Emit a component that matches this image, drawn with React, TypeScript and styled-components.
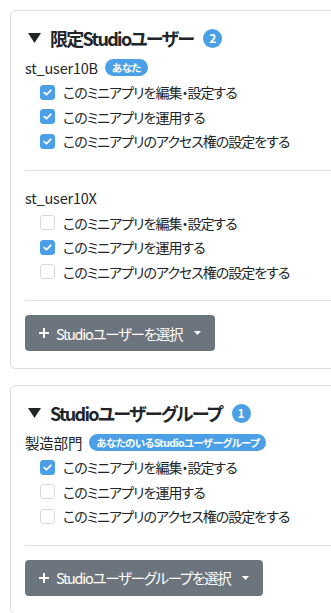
import React from "react";
import styled, { createGlobalStyle } from "styled-components";

const Global = createGlobalStyle`
  html, body { margin: 0; padding: 0; background: #fff; overflow: hidden; }
  body {
    font-family: "Noto Sans CJK JP", "Noto Sans", sans-serif;
    font-feature-settings: "palt";
    color: #212529;
  }
`;

const Page = styled.div`
  padding: 10px 0 0 10px;
  display: flex;
  flex-direction: column;
  gap: 16px;
`;

const Card = styled.section`
  width: 360px;
  border: 1px solid #dcdcdc;
  border-radius: 6px;
  padding: 13px 14px 17px 14px;
  display: flex;
  flex-direction: column;
`;

const Title = styled.h2`
  margin: 0;
  height: 28px;
  display: flex;
  align-items: center;
  font-size: 18px;
  letter-spacing: -1.7px;
  font-weight: 700;
  line-height: 28px;
`;

const Caret = styled.svg`
  width: 13px;
  height: 10px;
  margin: 0 9px 0 3px;
  flex: none;
`;

const CountBadge = styled.span`
  margin-left: 10px;
  width: 19px;
  height: 19px;
  border-radius: 50%;
  background: #4a9fe6;
  color: #fff;
  font-size: 12px;
  letter-spacing: 0;
  font-weight: 700;
  display: inline-flex;
  align-items: center;
  justify-content: center;
`;

const Block = styled.div<{ $first?: boolean }>`
  display: flex;
  flex-direction: column;
  margin-top: ${(p) => (p.$first ? "4px" : "0")};
`;

const UserRow = styled.div`
  height: 22px;
  display: flex;
  align-items: center;
  gap: 7px;
  font-size: 14.5px;
  letter-spacing: -0.2px;
`;

const Tag = styled.span`
  height: 17px;
  padding: 0 7px;
  border-radius: 9px;
  background: #4a9fe6;
  color: #fff;
  font-size: 10.5px;
  letter-spacing: -0.6px;
  font-weight: 700;
  display: inline-flex;
  align-items: center;
`;

const List = styled.div`
  margin-top: 2px;
  padding-left: 15px;
  display: flex;
  flex-direction: column;
`;

const Option = styled.label`
  height: 24.5px;
  display: flex;
  align-items: center;
  gap: 8px;
  font-size: 14px;
  letter-spacing: -1px;
  color: #212529;
`;

const Box = styled.span<{ $on: boolean }>`
  width: 15px;
  height: 15px;
  box-sizing: border-box;
  border-radius: 3px;
  flex: none;
  background: ${(p) => (p.$on ? "#4a9fe6" : "#fff")};
  border: 1px solid ${(p) => (p.$on ? "#4a9fe6" : "#d6d9dc")};
  display: flex;
  align-items: center;
  justify-content: center;
`;

const Divider = styled.hr<{ $tight?: boolean }>`
  width: 100%;
  margin: 16px 0 ${(p) => (p.$tight ? "14px" : "16px")};
  border: 0;
  border-top: 1px solid #dee2e6;
`;

const Button = styled.button`
  align-self: flex-start;
  height: 36px;
  padding: 0 14px;
  border: 0;
  border-radius: 4px;
  background: #6c757d;
  color: #fff;
  font-family: inherit;
  font-feature-settings: "palt";
  font-size: 14.5px;
  letter-spacing: -1.3px;
  display: flex;
  align-items: center;
  gap: 7px;
`;

const Plus = styled.svg`
  width: 10px;
  height: 10px;
  flex: none;
`;

const DropCaret = styled.svg`
  width: 7px;
  height: 4px;
  margin-left: 5px;
  flex: none;
`;

const options = [
  "このミニアプリを編集・設定する",
  "このミニアプリを運用する",
  "このミニアプリのアクセス権の設定をする",
];

type Entry = { name: string; tag?: string; checks: boolean[] };

function Check({ on, label }: { on: boolean; label: string }) {
  return (
    <Option>
      <Box $on={on}>
        {on && (
          <svg width="9" height="7" viewBox="0 0 9 7">
            <path d="M1.2 3.6 L3.5 5.7 L7.8 1.3" fill="none" stroke="#fff" strokeWidth="1.8" strokeLinecap="round" strokeLinejoin="round" />
          </svg>
        )}
      </Box>
      {label}
    </Option>
  );
}

function Section({ title, count, entries, button }: { title: string; count: number; entries: Entry[]; button: string }) {
  return (
    <Card>
      <Title>
        <Caret viewBox="0 0 13 10">
          <path d="M0 0 H13 L6.5 10 Z" fill="#212529" />
        </Caret>
        {title}
        <CountBadge>{count}</CountBadge>
      </Title>
      {entries.map((e, i) => (
        <React.Fragment key={e.name}>
          {i > 0 && <Divider />}
          <Block $first={i === 0}>
            <UserRow>
              {e.name}
              {e.tag && <Tag>{e.tag}</Tag>}
            </UserRow>
            <List>
              {options.map((o, j) => (
                <Check key={o} on={e.checks[j]} label={o} />
              ))}
            </List>
          </Block>
        </React.Fragment>
      ))}
      <Divider $tight />
      <Button>
        <Plus viewBox="0 0 10 10">
          <path d="M5 0 V10 M0 5 H10" stroke="#fff" strokeWidth="2" />
        </Plus>
        {button}
        <DropCaret viewBox="0 0 7 4">
          <path d="M0 0 H7 L3.5 4 Z" fill="#fff" />
        </DropCaret>
      </Button>
    </Card>
  );
}

export default function App() {
  return (
    <>
      <Global />
      <Page>
        <Section
          title="限定Studioユーザー"
          count={2}
          entries={[
            { name: "st_user10B", tag: "あなた", checks: [true, true, true] },
            { name: "st_user10X", checks: [false, true, false] },
          ]}
          button="Studioユーザーを選択"
        />
        <Section
          title="Studioユーザーグループ"
          count={1}
          entries={[
            { name: "製造部門", tag: "あなたのいるStudioユーザーグループ", checks: [true, false, false] },
          ]}
          button="Studioユーザーグループを選択"
        />
      </Page>
    </>
  );
}
